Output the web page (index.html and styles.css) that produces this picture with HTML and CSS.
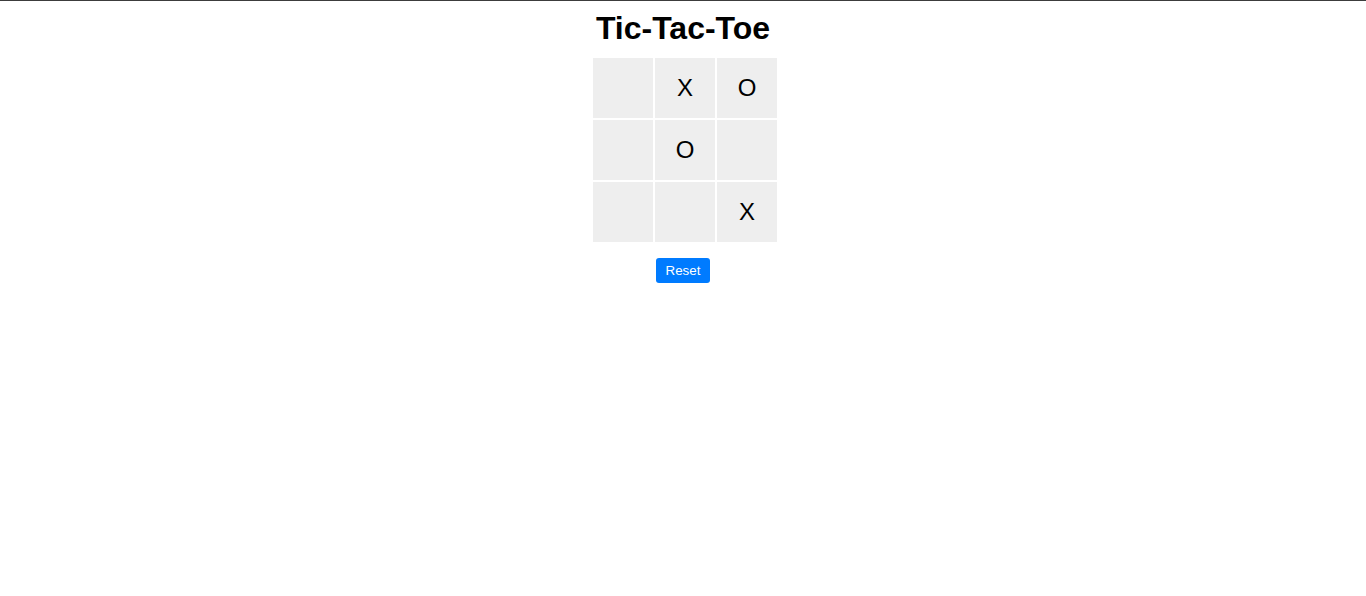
FILE: index.html
```html
<!DOCTYPE html>
<html>
<head>
<meta charset="utf-8">
<link rel="stylesheet" href="styles.css">
</head>
<body>
<div class="topline"></div>
<h1 class="title">Tic-Tac-Toe</h1>
<div class="board">
  <div class="cell"></div>
  <div class="cell">X</div>
  <div class="cell">O</div>
  <div class="cell"></div>
  <div class="cell">O</div>
  <div class="cell"></div>
  <div class="cell"></div>
  <div class="cell"></div>
  <div class="cell">X</div>
</div>
<div class="actions"><button class="reset">Reset</button></div>
</body>
</html>
```
FILE: styles.css
```css
html, body {
  margin: 0;
  padding: 0;
  background: #fff;
}
body {
  font-family: "Liberation Sans", Arial, sans-serif;
  text-align: center;
}
.topline {
  height: 1px;
  background: #3c3c3c;
}
.title {
  font-size: 32px;
  font-weight: bold;
  margin: 9px 0 11px;
  line-height: 37px;
  color: #000;
}
.board {
  width: 180px;
  margin: 0 auto;
  display: grid;
  grid-template-columns: repeat(3, 60px);
  grid-template-rows: repeat(3, 60px);
  gap: 2px;
}
.cell {
  background: #eee;
  display: flex;
  align-items: center;
  justify-content: center;
  font-size: 24px;
  color: #000;
}
.actions {
  margin-top: 16px;
}
.reset {
  background: #007bff;
  color: #fff;
  border: none;
  border-radius: 3px;
  font-family: "Liberation Sans", Arial, sans-serif;
  font-size: 13.333px;
  padding: 5px 10px;
  height: 25px;
  cursor: pointer;
}
```
